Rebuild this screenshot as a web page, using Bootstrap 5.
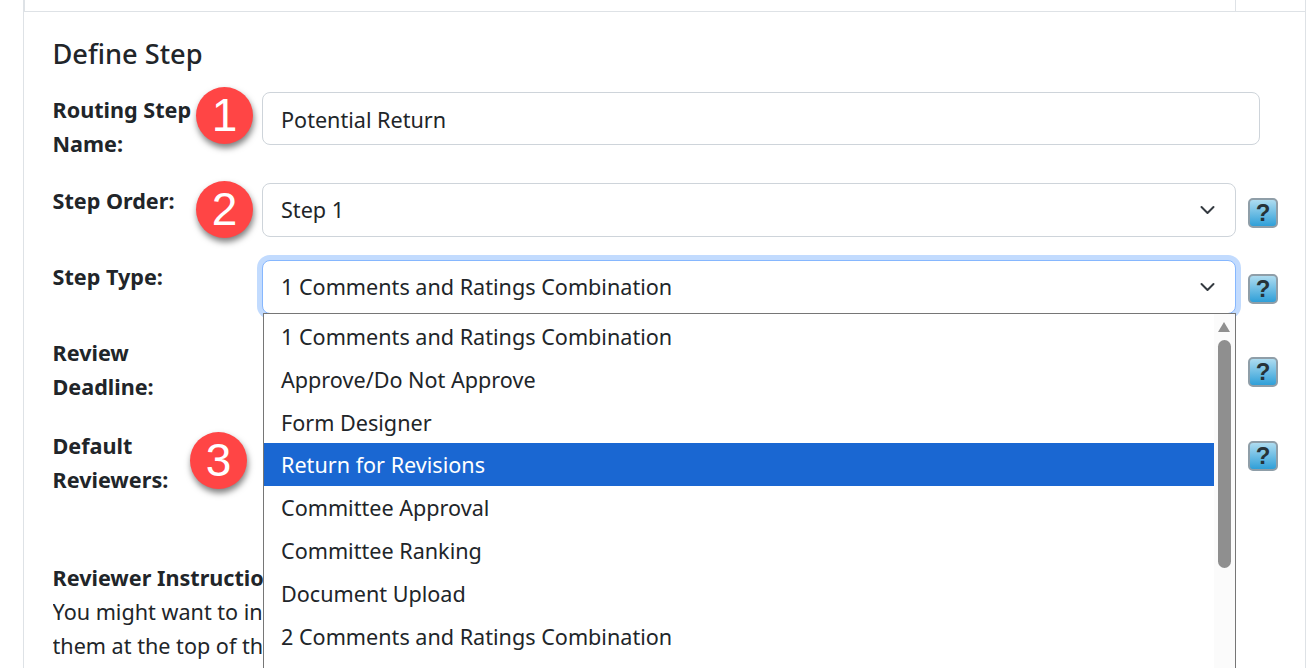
<!DOCTYPE html>
<html lang="en">
<head>
<meta charset="utf-8">
<title>Define Step</title>
<link rel="stylesheet" href="https://cdn.jsdelivr.net/npm/bootstrap@5.3.0/dist/css/bootstrap.min.css">
<style>
html, body { height: 668px; overflow: hidden; background: #fff; }
body { font-family: "Noto Sans", "Open Sans", sans-serif; font-size: 21.6px; line-height: 34px; color: #212529; }
.top-strip { height: 12px; margin: 0 7px 0 23px; border-left: 2px solid #dee2e6; border-right: 1px solid #dee2e6; border-bottom: 1px solid #dee2e6; display: flex; justify-content: flex-end; }
.top-strip-cell { width: 70px; border-left: 1px solid #dee2e6; }
.step-panel { position: relative; height: 656px; margin: 0 7px 0 23px; padding: 23px 27px 0 28.5px; border-left: 1px solid #dee2e6; border-right: 1px solid #dee2e6; }
.step-title { font-size: 27.2px; line-height: 38px; font-weight: 500; margin: 0 0 19px; }
.form-line { display: flex; align-items: flex-start; }
.row-name { margin-bottom: 22px; }
.row-order { margin-bottom: 23px; }
.row-type { margin-bottom: 22px; }
.row-deadline { margin-bottom: 25px; }
.row-reviewers { margin-bottom: 64px; }
.line-label { width: 209.5px; flex: none; font-weight: 700; margin: 0; }
.label-low { margin-top: 1px; }
.step-control { flex: 1 1 auto; min-width: 0; font-size: 21.6px; line-height: 32px; border-radius: 8px; color: #212529; padding: 10px 20px 10px 18px; border-color: #ced4da; }
input.step-control { margin-right: 18px; padding-top: 11px; padding-bottom: 9px; height: 53px; }
select.step-control { background-size: 21px 16px; background-position: right 17px center; padding-right: 50px; }
select.step-control:focus, .is-open { border-color: #86b7fe; box-shadow: 0 0 0 5px #c2dbfe; }
.help-btn { flex: none; width: 30px; height: 30px; margin: 15px 0 0 12px; display: flex; align-items: center; justify-content: center; border-radius: 5px; border: 2px solid #8f9ea8; background: linear-gradient(#aedcf0, #2f9fd8); color: #263238; font: 700 24px/1 "Liberation Sans", sans-serif; padding: 0; }
.help-type { margin-top: 14px; }
.help-deadline { margin-top: 21px; }
.help-reviewers { margin-top: 12px; }
.instructions { margin: 0; white-space: nowrap; width: 211px; overflow: hidden; }
.pick-menu { position: absolute; left: 239px; top: 301px; width: 973px; height: 367px; border: 1px solid #767676; border-bottom: 0; background: #fff; overflow: hidden; border-radius: 0; padding-top: 1px; }
.pick-menu .list-group-item { border: 0; border-radius: 0; padding: 0 0 0 17px; height: 43px; line-height: 43px; margin-right: 21px; font-size: 21.6px; color: #212529; background: transparent; white-space: nowrap; }
.pick-menu .list-group-item.active { background: #1a67d2; color: #fff; }
.pick-track { position: absolute; top: 0; bottom: 0; right: 0; width: 21px; background: #fbfbfb; }
.pick-arrow { position: absolute; top: 8px; left: 4px; width: 0; height: 0; border-left: 6.5px solid transparent; border-right: 6.5px solid transparent; border-bottom: 10px solid #8f8f8f; }
.pick-thumb { position: absolute; top: 26px; left: 4px; width: 13px; height: 228px; border-radius: 7px; background: #8f8f8f; }
.num-pin { position: absolute; width: 57px; height: 57px; border-radius: 50%; background: #ff4545; color: #fff; display: flex; align-items: center; justify-content: center; padding-bottom: 2px; font: 400 46px/1 "Liberation Sans", sans-serif; box-shadow: 1px 4px 6px rgba(0,0,0,.5); }
.pin-a { left: 172px; top: 75px; }
.pin-b { left: 172px; top: 169px; }
.pin-c { left: 166px; top: 420px; }
</style>
</head>
<body>
<div class="top-strip"><div class="top-strip-cell"></div></div>
<div class="step-panel">
  <h2 class="step-title">Define Step</h2>

  <div class="form-line row-name">
    <label class="line-label label-low" for="stepName">Routing Step<br>Name:</label>
    <input id="stepName" class="form-control step-control" value="Potential Return">
  </div>

  <div class="form-line row-order">
    <label class="line-label label-low" for="stepOrder">Step Order:</label>
    <select id="stepOrder" class="form-select step-control"><option>Step 1</option></select>
    <button class="help-btn" type="button">?</button>
  </div>

  <div class="form-line row-type">
    <label class="line-label" for="stepType">Step Type:</label>
    <select id="stepType" class="form-select step-control is-open"><option>1 Comments and Ratings Combination</option></select>
    <button class="help-btn help-type" type="button">?</button>
  </div>

  <div class="form-line row-deadline">
    <label class="line-label">Review<br>Deadline:</label>
    <div class="flex-grow-1"></div>
    <button class="help-btn help-deadline" type="button">?</button>
  </div>

  <div class="form-line row-reviewers">
    <label class="line-label">Default<br>Reviewers:</label>
    <div class="flex-grow-1"></div>
    <button class="help-btn help-reviewers" type="button">?</button>
  </div>

  <p class="instructions"><strong>Reviewer Instructions</strong><br>You might want to in<br>them at the top of the</p>

  <div class="pick-menu list-group">
    <div class="list-group-item">1 Comments and Ratings Combination</div>
    <div class="list-group-item">Approve/Do Not Approve</div>
    <div class="list-group-item">Form Designer</div>
    <div class="list-group-item active">Return for Revisions</div>
    <div class="list-group-item">Committee Approval</div>
    <div class="list-group-item">Committee Ranking</div>
    <div class="list-group-item">Document Upload</div>
    <div class="list-group-item">2 Comments and Ratings Combination</div>
    <div class="pick-track"><div class="pick-arrow"></div><div class="pick-thumb"></div></div>
  </div>

  <div class="num-pin pin-a">1</div>
  <div class="num-pin pin-b">2</div>
  <div class="num-pin pin-c">3</div>
</div>
</body>
</html>
